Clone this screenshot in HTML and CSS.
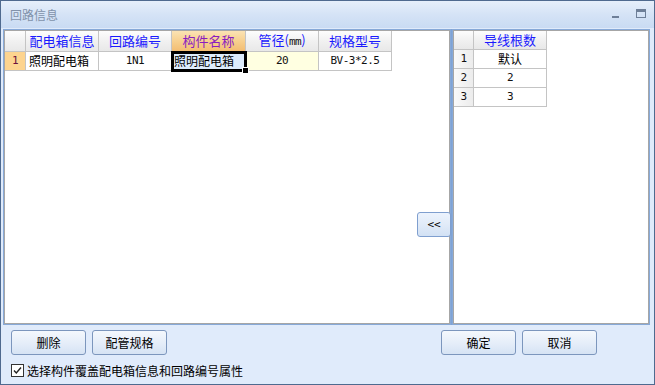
FILE: index.html
```html
<!DOCTYPE html>
<html lang="zh-CN">
<head>
  <meta charset="UTF-8">
  <title>回路信息</title>
  <link rel="stylesheet" href="styles.css">
</head>
<body>
  <div class="window">
    <div class="titlebar">
      <span class="title">回路信息</span>
      <span class="win-btn min"></span>
      <span class="win-btn max"></span>
    </div>

    <div class="panes">
      <div class="pane pane-left">
        <div class="pane-inner">
          <table class="grid">
            <colgroup>
              <col class="c-idx"><col class="c-w"><col class="c-w"><col class="c-w3"><col class="c-w"><col class="c-w">
            </colgroup>
            <tr>
              <th class="corner"></th>
              <th>配电箱信息</th>
              <th>回路编号</th>
              <th class="sel-head">构件名称</th>
              <th>管径(<span class="mono">mm</span>)</th>
              <th>规格型号</th>
            </tr>
            <tr>
              <td class="idx sel-idx">1</td>
              <td class="left">照明配电箱</td>
              <td class="mono">1N1</td>
              <td class="left current">照明配电箱</td>
              <td class="mono yellow">20</td>
              <td class="mono">BV-3*2.5</td>
            </tr>
          </table>
          <button class="move-btn">&lt;&lt;</button>
        </div>
      </div>
      <div class="splitter"></div>
      <div class="pane pane-right">
        <div class="pane-inner">
          <table class="grid grid-right">
            <colgroup>
              <col class="c-idx2"><col class="c-w">
            </colgroup>
            <tr><th class="corner"></th><th>导线根数</th></tr>
            <tr><td class="idx">1</td><td>默认</td></tr>
            <tr><td class="idx">2</td><td class="mono">2</td></tr>
            <tr><td class="idx">3</td><td class="mono">3</td></tr>
          </table>
        </div>
      </div>
    </div>

    <div class="footer">
      <div class="btn-row">
        <div class="btn-group">
          <button class="btn">删除</button>
          <button class="btn">配管规格</button>
        </div>
        <div class="btn-group right">
          <button class="btn">确定</button>
          <button class="btn">取消</button>
        </div>
      </div>
      <label class="check">
        <svg width="13" height="13" viewBox="0 0 13 13">
          <rect x="0.5" y="0.5" width="12" height="12" fill="#fff" stroke="#333"/>
          <path d="M3 6.5 L5.3 9 L10 3.5" fill="none" stroke="#222" stroke-width="1.4"/>
        </svg>
        选择构件覆盖配电箱信息和回路编号属性
      </label>
    </div>
  </div>
</body>
</html>
```

FILE: styles.css
```css
body {
  margin: 0;
  font-family: "Noto Sans CJK SC", sans-serif;
  font-size: 12px;
  color: #000;
}

.window {
  width: 655px;
  height: 385px;
  box-sizing: border-box;
  border: 1px solid #4f6a8f;
  background: #e0ebfb;
  display: flex;
  flex-direction: column;
}

.titlebar {
  height: 27px;
  flex: none;
  display: flex;
  align-items: center;
  padding-left: 9px;
  background: linear-gradient(#e6effb, #d5e3f6 50%, #c9dbf3);
}

.title {
  flex: 1;
  color: #8192aa;
  font-size: 12px;
}

.win-btn.min {
  width: 7px;
  height: 2px;
  background: #6e7f98;
  margin-right: 17px;
  margin-top: 4px;
}

.win-btn.max {
  width: 8px;
  height: 5px;
  border: 1px solid #6e7f98;
  border-top-width: 3px;
  margin-right: 8px;
  margin-top: -2px;
}

.panes {
  display: flex;
  height: 296px;
  margin-top: 1px;
  padding-left: 2px;
  flex: none;
}

.pane {
  border: 1px solid #87a9d8;
  box-sizing: border-box;
  display: flex;
}

.pane-left {
  width: 448px;
}

.pane-right {
  width: 198px;
}

.splitter {
  width: 1px;
  background: #7ea3d6;
}

.pane-inner {
  flex: 1;
  border: 1px solid #a6a6a6;
  background: #fff;
  position: relative;
}

.grid {
  border-collapse: separate;
  border-spacing: 0;
  table-layout: fixed;
}

.c-idx { width: 21px; }
.c-idx2 { width: 20px; }
.c-w { width: 73px; }
.c-w3 { width: 74px; }

.grid th,
.grid td {
  height: 18px;
  padding: 0;
  border-right: 1px solid #c4c4c4;
  border-bottom: 1px solid #c4c4c4;
  text-align: center;
  white-space: nowrap;
  overflow: visible;
  line-height: 18px;
}

.grid th {
  font-weight: normal;
  font-size: 13px;
  color: #1a1aff;
  background: linear-gradient(#fdfdfd, #f1f1f1 50%, #e8e8e8);
}

.grid th.sel-head {
  color: #8a1cc0;
  background: linear-gradient(#fbe3b4, #f7d08f 50%, #f3bd72);
}

.grid td.idx {
  background: linear-gradient(90deg, #fafafa, #ececec);
}

.grid td.sel-idx {
  background: #fdd48f;
  color: #6b0f3e;
}

.grid td.left {
  text-align: left;
  padding-left: 3px;
}

.grid td.current {
  position: relative;
  background: #ddecfc;
  outline: 3px solid #000;
  outline-offset: -2px;
  padding-left: 2px;
}

.grid td.current::after {
  content: "";
  position: absolute;
  right: -3px;
  bottom: -3px;
  width: 5px;
  height: 5px;
  background: #000;
  outline: 1px solid #fff;
}

.grid td.yellow {
  background: #ffffe1;
}

.mono,
.grid td.idx {
  font-family: "DejaVu Sans Mono", monospace;
  font-size: 11px;
  letter-spacing: -0.5px;
  color: #111;
}

.grid td.sel-idx {
  color: #6b0f3e;
}

.move-btn {
  position: absolute;
  right: -2px;
  top: 181px;
  width: 34px;
  height: 25px;
  padding: 0;
  border: 1px solid #7f9fcf;
  border-radius: 3px;
  background: linear-gradient(#ecf3fd, #e1ebf8 50%, #d2e1f4);
  font-family: "DejaVu Sans Mono", monospace;
  font-size: 11px;
  color: #000;
}

.footer {
  flex: 1;
  padding: 5px 0 0 10px;
}

.btn-row {
  display: flex;
  justify-content: space-between;
  padding-right: 57px;
}

.btn-group {
  display: flex;
  gap: 6px;
}

.btn {
  width: 75px;
  height: 25px;
  padding: 0;
  border: 1px solid #7c96bd;
  border-radius: 3px;
  background: linear-gradient(#f4f8fd, #e6eef9 50%, #d6e3f4);
  font-family: "Noto Sans CJK SC", sans-serif;
  font-size: 12px;
  color: #000;
}

.check {
  display: flex;
  align-items: center;
  gap: 3px;
  margin-top: 8px;
  font-size: 12px;
  height: 14px;
}
```
